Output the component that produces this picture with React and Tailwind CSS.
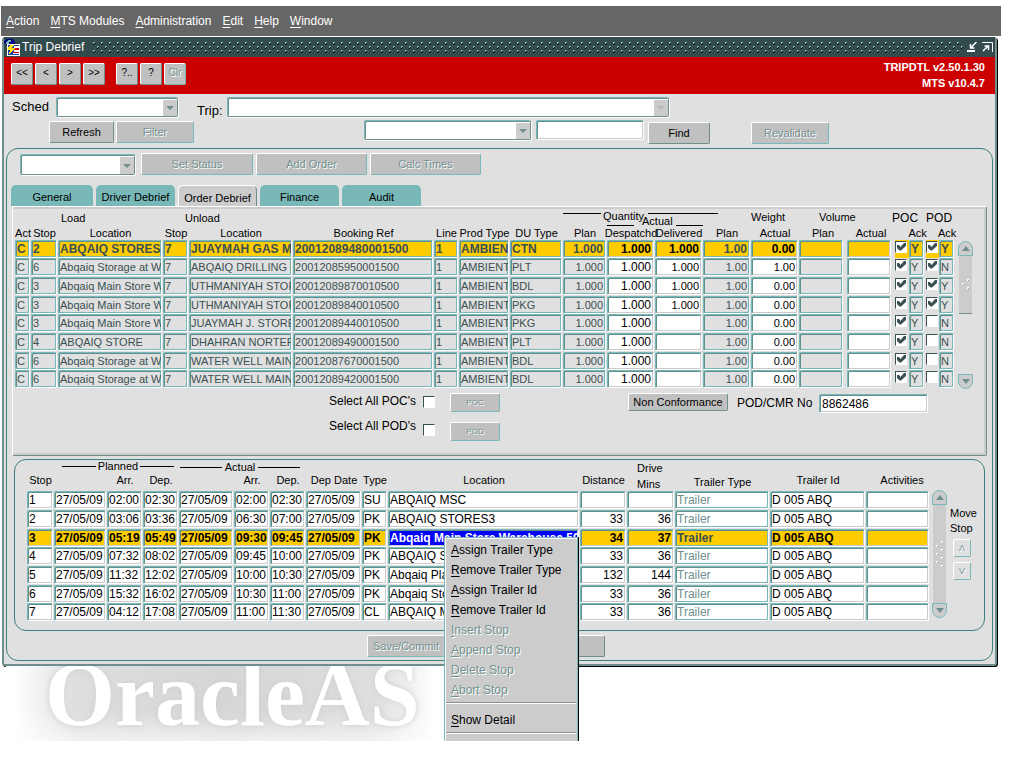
import React from "react";

const orderCols = [
  { key: "act", label: "Act", col: "w-[16px]" },
  { key: "stop", label: "Stop", col: "w-[27px]" },
  { key: "load", label: "Location", col: "w-[105px]" },
  { key: "unloadStop", label: "Stop", col: "w-[26px]" },
  { key: "unload", label: "Location", col: "w-[104px]" },
  { key: "booking", label: "Booking Ref", col: "w-[141px]" },
  { key: "line", label: "Line", col: "w-[25px]" },
  { key: "prod", label: "Prod Type", col: "w-[51px]" },
  { key: "du", label: "DU Type", col: "w-[53px]" },
  { key: "qtyPlan", label: "Plan", col: "w-[44px]", right: true },
  { key: "despatched", label: "Despatchd", col: "w-[48px]", right: true, open: true, big: true },
  { key: "delivered", label: "Delivered", col: "w-[48px]", right: true, open: true },
  { key: "weightPlan", label: "Plan", col: "w-[48px]", right: true },
  { key: "weight", label: "Actual", col: "w-[48px]", right: true, open: true },
  { key: "volumePlan", label: "Plan", col: "w-[48px]", gap: true },
  { key: "volume", label: "Actual", col: "w-[48px]", gap: true, open: true },
  { key: "poc", label: "", col: "w-[14px]", check: true },
  { key: "pocAck", label: "Ack", col: "w-[17px]", gap2: true },
  { key: "pod", label: "", col: "w-[13px]", check: true },
  { key: "podAck", label: "Ack", col: "w-[16px]" },
];

const order = (stop, load, unload, booking, du, despatched, delivered, weight, pod, podAck) => ({
  act: "C", stop, load, unloadStop: "7", unload, booking, line: "1", prod: "AMBIENT", du,
  qtyPlan: "1.000", despatched, delivered, weightPlan: "1.00", weight,
  volumePlan: "", volume: "", poc: true, pocAck: "Y", pod, podAck,
});

const orders = [
  order("2", "ABQAIQ STORES3", "JUAYMAH GAS MAIN", "20012089480001500", "CTN", "1.000", "1.000", "0.00", true, "Y"),
  order("6", "Abqaiq Storage at Wh", "ABQAIQ DRILLING MAT", "20012085950001500", "PLT", "1.000", "1.000", "1.00", true, "N"),
  order("3", "Abqaiq Main Store Wh", "UTHMANIYAH STORE", "20012089870010500", "BDL", "1.000", "1.000", "0.00", true, "Y"),
  order("3", "Abqaiq Main Store Wh", "UTHMANIYAH STORE", "20012089840010500", "PKG", "1.000", "1.000", "0.00", true, "Y"),
  order("3", "Abqaiq Main Store Wh", "JUAYMAH J. STORE", "20012089440010500", "PKG", "1.000", "", "0.00", false, "N"),
  order("4", "ABQAIQ STORE", "DHAHRAN NORTERN", "20012089490001500", "PLT", "1.000", "", "0.00", false, "N"),
  order("6", "Abqaiq Storage at Wh", "WATER WELL MAINT", "20012087670001500", "BDL", "1.000", "", "0.00", false, "N"),
  order("6", "Abqaiq Storage at Wh", "WATER WELL MAINT", "20012089420001500", "BDL", "1.000", "", "0.00", false, "N"),
];

const stopCols = [
  { label: "Stop", col: "w-[27px]" },
  { label: "", col: "w-[53px]" },
  { label: "Arr.", col: "w-[36px]" },
  { label: "Dep.", col: "w-[36px]" },
  { label: "", col: "w-[55px]" },
  { label: "Arr.", col: "w-[36px]" },
  { label: "Dep.", col: "w-[36px]" },
  { label: "Dep Date", col: "w-[56px]" },
  { label: "Type", col: "w-[26px]" },
  { label: "Location", col: "w-[192px]" },
  { label: "Distance", col: "w-[47px]", right: true },
  { label: "Mins", col: "w-[48px]", right: true },
  { label: "Trailer Type", col: "w-[95px]", muted: true },
  { label: "Trailer Id", col: "w-[96px]" },
  { label: "Activities", col: "w-[64px]" },
];

const D = "27/05/09";
const T = "Trailer";
const ID = "D 005 ABQ";

const stops = [
  ["1", D, "02:00", "02:30", D, "02:00", "02:30", D, "SU", "ABQAIQ MSC", "", "", T, ID, ""],
  ["2", D, "03:06", "03:36", D, "06:30", "07:00", D, "PK", "ABQAIQ STORES3", "33", "36", T, ID, ""],
  ["3", D, "05:19", "05:49", D, "09:30", "09:45", D, "PK", "Abqaiq Main Store Warehouse 50", "34", "37", T, ID, ""],
  ["4", D, "07:32", "08:02", D, "09:45", "10:00", D, "PK", "ABQAIQ STORE", "33", "36", T, ID, ""],
  ["5", D, "11:32", "12:02", D, "10:00", "10:30", D, "PK", "Abqaiq Plant", "132", "144", T, ID, ""],
  ["6", D, "15:32", "16:02", D, "10:30", "11:00", D, "PK", "Abqaiq Storage", "33", "36", T, ID, ""],
  ["7", D, "04:12", "17:08", D, "11:00", "11:30", D, "CL", "ABQAIQ MSC", "33", "36", T, ID, ""],
];

const disabledText = "text-[#739292] [text-shadow:1px_1px_0_#fff]";

function Btn({ className = "", disabled, children, ...rest }) {
  return (
    <button
      type="button"
      disabled={disabled}
      className={`shrink-0 overflow-hidden whitespace-nowrap rounded-[2px] border border-t-white border-l-white bg-[#c0c0c0] ${
        disabled
          ? `border-r-[#78b8b8] border-b-[#78b8b8] ${disabledText}`
          : "border-r-[#6f8f8f] border-b-[#6f8f8f] text-black"
      } ${className}`}
      {...rest}
    >
      {children}
    </button>
  );
}

function Field({ className = "", ...rest }) {
  return (
    <input
      type="text"
      readOnly
      className={`block w-full min-w-0 rounded-[2px] border border-t-[#78b8b8] border-l-[#78b8b8] border-r-white border-b-white outline-none ${className}`}
      {...rest}
    />
  );
}

const insetOpen = "shadow-[inset_1px_1px_0_#5f8f8f,inset_-1px_-1px_0_#cccccc]";
const insetClosed = "shadow-[inset_1px_1px_0_#5f8f8f,inset_-1px_-1px_0_#78b8b8]";

function Combo({ label, id, className = "", faint }) {
  return (
    <div
      className={`relative shrink-0 rounded-[2px] border border-t-[#78b8b8] border-l-[#78b8b8] border-r-[#6f8f8f] border-b-[#6f8f8f] bg-white shadow-[1px_1px_0_#fff,inset_1px_1px_0_#6f8f8f] ${className}`}
    >
      <select id={id} aria-label={label} className="h-full w-full appearance-none outline-none">
        <option></option>
      </select>
      <span className="pointer-events-none absolute top-[2px] right-0 bottom-0 flex w-[14px] items-center justify-center bg-[#cccccc]">
        <svg width="8" height="4" viewBox="0 0 8 4">
          <path d="M0 0h8L4 4z" fill={faint ? "#b8b8b8" : "#6f8f8f"} />
        </svg>
      </span>
    </div>
  );
}

function Check({ checked, ...rest }) {
  return (
    <span className="grid h-[12px] w-[12px]">
      <input
        type="checkbox"
        defaultChecked={checked}
        className="col-start-1 row-start-1 h-[12px] w-[12px] appearance-none border border-t-[#3a5052] border-l-[#3a5052] border-r-white border-b-white bg-white"
        {...rest}
      />
      {checked && (
        <svg width="12" height="12" viewBox="0 0 12 12" className="pointer-events-none col-start-1 row-start-1">
          <path d="M2 4h2l1.500 2L9 2h2v3L6 9.500H4.500L2 7z" fill="#3a5052" />
        </svg>
      )}
    </span>
  );
}

function ArrowCap({ down }) {
  return (
    <button
      type="button"
      aria-label={down ? "Scroll down" : "Scroll up"}
      className={`flex h-[15px] w-[15px] shrink-0 items-center justify-center border border-[#78b8b8] bg-[#cccccc] ${
        down ? "rounded-b-full" : "rounded-t-full"
      }`}
    >
      <svg width="8" height="5" viewBox="0 0 8 5">
        <path d={down ? "M0 0h8L4 5z" : "M0 5h8L4 0z"} fill="#6f8f8f" />
      </svg>
    </button>
  );
}

function Grip({ tall }) {
  const rows = tall ? [0, 4, 8, 12, 16, 20, 24] : [0, 4, 8];
  return (
    <svg width="8" height={tall ? 27 : 11} shapeRendering="crispEdges">
      {rows.map((y, i) => {
        const x = i % 2 ? 0 : 5;
        return (
          <g key={y}>
            <rect x={x} y={y} width="2" height="2" fill="#fff" />
            <rect x={x + 1} y={y + 1} width="1" height="1" fill="#78b8b8" />
          </g>
        );
      })}
    </svg>
  );
}

function MenuBar() {
  return (
    <nav className="mr-2 ml-px flex h-[30px] items-center gap-[11px] bg-[#666666] pl-[5px] text-[12px] text-white">
      {["Action", "MTS Modules", "Administration", "Edit", "Help", "Window"].map((m) => (
        <button key={m} type="button">
          <span className="underline underline-offset-2">{m[0]}</span>
          {m.slice(1)}
        </button>
      ))}
    </nav>
  );
}

function TitleBar() {
  return (
    <div className="flex h-5 items-center bg-[#344b4d] text-white">
      <svg width="16" height="17" viewBox="0 0 16 17" className="shrink-0" shapeRendering="crispEdges">
        <path d="M3 0h5l3 3v4H4L0 4V2z" fill="#000080" />
        <path d="M4 1h3v2H5v2H2V3z" fill="#78b8b8" />
        <rect x="3" y="5" width="13" height="12" fill="#fff" />
        <rect x="4" y="6" width="11" height="10" fill="#1c3fb0" />
        <path d="M10 7h5v2h-5zM10 11h5v2h-5zM9 14h6v1H9z" fill="#fff" />
        <path d="M10 9h5v2h-5zM9 13h6v1H9z" fill="#d00000" />
        <path d="M6 6h4L8 9h3l-6 7 1-5H3z" fill="#ffe600" />
      </svg>
      <h1 className="mr-2 ml-[2px] text-[12px]">Trip Debrief</h1>
      <svg height="11" className="w-full min-w-0 flex-1" shapeRendering="crispEdges" aria-hidden="true">
        <defs>
          <pattern id="dots" width="8" height="8" patternUnits="userSpaceOnUse">
            <rect x="1" y="0" width="2" height="2" fill="#78b8b8" />
            <rect x="2" y="1" width="1" height="1" fill="#000" />
            <rect x="1" y="2" width="1" height="1" fill="#000" />
            <rect x="5" y="4" width="2" height="2" fill="#78b8b8" />
            <rect x="6" y="5" width="1" height="1" fill="#000" />
            <rect x="5" y="6" width="1" height="1" fill="#000" />
          </pattern>
        </defs>
        <rect width="100%" height="11" fill="url(#dots)" />
      </svg>
      <div className="mr-[2px] ml-1 flex gap-[5px]">
        <button type="button" aria-label="Minimize">
          <svg width="10" height="10" viewBox="0 0 10 10" className="block" fill="none" stroke="#fff">
            <path d="M9.500 0L4 5.500M3.500 2v4h4" strokeWidth="1.500" />
            <path d="M0 9h8" strokeWidth="2" />
          </svg>
        </button>
        <button type="button" aria-label="Maximize">
          <svg width="11" height="10" viewBox="0 0 11 10" className="block" fill="none" stroke="#fff">
            <path d="M0 .5h10.500V10" />
            <path d="M1 9l5-5M2.500 4h4v4" strokeWidth="1.500" />
          </svg>
        </button>
      </div>
    </div>
  );
}

function Toolbar() {
  const btn = "h-[22px] w-[22px] text-[10px] leading-none pb-[3px]";
  return (
    <div className="flex h-[37px] items-start bg-[#cc0000] pt-[6px] pl-[7px]">
      <div className="flex gap-[2px]">
        <Btn className={btn}>&lt;&lt;</Btn>
        <Btn className={btn}>&lt;</Btn>
        <Btn className={btn}>&gt;</Btn>
        <Btn className={btn}>&gt;&gt;</Btn>
      </div>
      <div className="ml-[11px] flex gap-[2px]">
        <Btn className={btn}>?..</Btn>
        <Btn className={btn}>?</Btn>
        <Btn className={btn} disabled>Clr</Btn>
      </div>
      <div className="-mt-1 mr-[10px] ml-auto text-right text-[11px] leading-4 font-bold text-white">
        <p>TRIPDTL v2.50.1.30</p>
        <p>MTS v10.4.7</p>
      </div>
    </div>
  );
}

function Filters() {
  return (
    <div className="pt-[3px]">
      <div className="flex h-[23px] items-start pl-2">
        <label htmlFor="sched" className="w-[44px] text-[13px] leading-5">Sched</label>
        <Combo id="sched" className="h-5 w-[122px]" />
        <label htmlFor="trip" className="ml-[19px] w-[30px] pt-1 text-[13px] leading-5">Trip:</label>
        <Combo id="trip" className="h-5 w-[442px]" faint />
      </div>
      <div className="flex h-6 items-start pl-[45px]">
        <Btn className="mt-px h-[22px] w-[65px]">Refresh</Btn>
        <Btn className="mt-px ml-[2px] h-[22px] w-[78px]" disabled>Filter</Btn>
        <Combo label="Search by" className="ml-[170px] h-5 w-[167px]" />
        <Field aria-label="Search text" className={`ml-[5px] h-5 max-w-[108px] bg-white px-1 ${insetOpen}`} />
        <Btn className="mt-[2px] ml-[4px] h-[22px] w-[62px]">Find</Btn>
        <Btn className="mt-[2px] ml-[41px] h-[22px] w-[78px]" disabled>Revalidate</Btn>
      </div>
    </div>
  );
}

function Tabs() {
  const tabs = ["General", "Driver Debrief", "Order Debrief", "Finance", "Audit"];
  return (
    <div role="tablist" className="mt-[10px] flex gap-[3px] pl-1">
      {tabs.map((t) => (
        <button
          key={t}
          type="button"
          role="tab"
          aria-selected={t === "Order Debrief"}
          className={`h-[21px] w-[79px] rounded-t-[5px] pt-1 first:w-[82px] ${
            t === "Order Debrief"
              ? "border border-b-0 border-t-white border-l-white border-r-[#6f8f8f] bg-[#cccccc]"
              : "bg-[#78b8b8]"
          }`}
        >
          {t}
        </button>
      ))}
    </div>
  );
}

function OrderTable() {
  return (
    <div className="flex pt-px pl-[2px]">
      <table className="w-full min-w-0 flex-1 table-fixed border-collapse">
        <colgroup>
          {orderCols.map((c) => (
            <col key={c.key} className={c.col} />
          ))}
        </colgroup>
        <thead className="whitespace-nowrap">
          <tr className="h-[18px] text-left leading-[13px]">
            <th colSpan={2} />
            <th className="pt-1 pl-[3px] align-top font-normal">Load</th>
            <th colSpan={2} className="pt-1 pl-[22px] align-top font-normal">Unload</th>
            <th colSpan={4} />
            <th colSpan={4} className="align-top font-normal">
              <div className="mt-[2px] flex h-[5px] items-start gap-[2px]">
                <span className="mt-[3px] h-px w-[38px] bg-black" />
                <span>Quantity</span>
                <span className="mt-[3px] ml-[2px] h-px w-[70px] bg-black" />
              </div>
              <div className="flex h-[11px] items-start gap-2 pl-[44px]">
                <span className="mt-[10px] h-px w-[27px] bg-black" />
                <span>Actual</span>
                <span className="mt-[10px] -ml-[5px] h-px w-[27px] bg-black" />
              </div>
            </th>
            <th className="pt-[3px] align-top font-normal">Weight</th>
            <th colSpan={2} className="pt-[3px] pl-5 align-top font-normal">Volume</th>
            <th colSpan={2} className="pt-1 align-top text-[12px] font-normal">
              <span className="-ml-[3px]">POC</span>
            </th>
            <th colSpan={2} className="pt-1 align-top text-[12px] font-normal">POD</th>
          </tr>
          <tr className="h-[14px] leading-[14px]">
            {orderCols.map((c) => (
              <th key={c.key} className="align-top font-normal">
                <span className="flex justify-center">{c.label}</span>
              </th>
            ))}
          </tr>
        </thead>
        <tbody>
          {orders.map((o, i) => {
            const current = i === 0;
            return (
              <tr key={o.booking} className={i % 3 === 0 ? "h-[18px]" : "h-[19px]"}>
                {orderCols.map((c) =>
                  c.check ? (
                    <td key={c.key} className={`pt-px align-top ${current ? "bg-[#ffcc00]" : ""}`}>
                      <Check checked={o[c.key]} aria-label={c.key} />
                    </td>
                  ) : (
                    <td key={c.key} className={`align-top ${c.gap ? "pr-1" : c.gap2 ? "pr-[2px]" : "pr-px"}`}>
                      <Field
                        aria-label={c.key}
                        defaultValue={o[c.key]}
                        className={`h-[18px] ${c.right ? "pr-[2px] text-right" : "pl-px"} ${
                          current
                            ? "bg-[#ffcc00] text-[12px] font-bold"
                            : c.open
                              ? "bg-white"
                              : "bg-[#e0e0e0]"
                        } ${c.big ? "text-[12px]" : ""} ${
                          c.open ? `text-black ${insetOpen}` : `text-[#3a5052] ${insetClosed}`
                        }`}
                      />
                    </td>
                  )
                )}
              </tr>
            );
          })}
        </tbody>
      </table>
      <div className="mt-[33px] mr-[13px] ml-[3px] flex w-[15px] flex-col">
        <ArrowCap />
        <div className="flex h-[58px] w-[13px] items-center justify-center self-center border-b border-[#6f8f8f] bg-[#cccccc]">
          <Grip />
        </div>
        <div className="flex-1" />
        <ArrowCap down />
      </div>
    </div>
  );
}

function OrderFooter() {
  return (
    <div className="flex items-start pl-[316px] text-[12px]">
      <div className="flex w-[94px] flex-col leading-[25px] whitespace-nowrap">
        <label htmlFor="all-poc">Select All POC's</label>
        <label htmlFor="all-pod">Select All POD's</label>
      </div>
      <div className="mt-[7px] flex w-[27px] flex-col gap-4">
        <Check id="all-poc" />
        <Check id="all-pod" />
      </div>
      <div className="mt-[4px] flex flex-col gap-[10px]">
        <Btn className="h-[19px] w-[50px] text-[8px]" disabled>POC</Btn>
        <Btn className="h-[19px] w-[50px] text-[8px]" disabled>POD</Btn>
      </div>
      <Btn className="mt-[4px] ml-[128px] h-[18px] w-[100px] text-[11px]">Non Conformance</Btn>
      <label htmlFor="pod-no" className="mt-[5px] ml-[9px] w-[82px] leading-[18px] whitespace-nowrap">POD/CMR No</label>
      <Field id="pod-no" defaultValue="8862486" className={`mt-[5px] h-[19px] max-w-[109px] bg-white pl-[2px] ${insetOpen}`} />
    </div>
  );
}

function StopTable() {
  return (
    <table className="w-full min-w-0 flex-1 table-fixed border-collapse">
      <colgroup>
        {stopCols.map((c, i) => (
          <col key={i} className={c.col} />
        ))}
      </colgroup>
      <thead className="whitespace-nowrap">
        <tr className="h-[14px] leading-[13px]">
          <th />
          <th colSpan={3} className="align-top font-normal">
            <div className="flex items-center gap-[2px] pr-[5px] pl-2">
              <span className="h-px flex-1 bg-black" />
              Planned
              <span className="h-px flex-1 bg-black" />
            </div>
          </th>
          <th colSpan={3} className="align-top font-normal">
            <div className="flex items-center gap-[3px] pt-px pr-[6px] pl-px">
              <span className="h-px flex-1 bg-black" />
              Actual
              <span className="h-px flex-1 bg-black" />
            </div>
          </th>
          <th colSpan={4} />
          <th className="pt-[2px] pl-[10px] text-left align-top leading-[12px] font-normal">Drive</th>
          <th colSpan={3} />
        </tr>
        <tr className="h-[17px] leading-[13px]">
          {stopCols.map((c, i) => (
            <th
              key={i}
              className={`font-normal ${
                c.label === "Mins" ? "pl-[10px] text-left align-bottom" : c.muted ? "align-middle" : "align-top"
              } ${c.label === "Activities" ? "pl-2" : ""}`}
            >
              {c.label}
            </th>
          ))}
        </tr>
      </thead>
      <tbody>
        {stops.map((row, i) => {
          const current = i === 2;
          return (
            <tr key={row[0]} className={i % 3 === 2 ? "h-[18px]" : "h-[19px]"}>
              {stopCols.map((c, j) => {
                const picked = current && c.label === "Location";
                return (
                  <td key={j} className="pr-px align-top">
                    <Field
                      aria-label={c.label || "Date"}
                      defaultValue={row[j]}
                      className={`h-[18px] text-[12px] ${c.right ? "pr-[2px] text-right" : "pl-px"} ${
                        picked
                          ? "bg-[#0000ff] font-bold text-white"
                          : current
                            ? "bg-[#ffcc00] font-bold"
                            : "bg-white"
                      } ${
                        c.muted
                          ? `${insetClosed} ${current ? "text-[#3a5052]" : "text-[#6f8f8f]"}`
                          : `${insetOpen} ${picked ? "" : "text-black"}`
                      }`}
                    />
                  </td>
                );
              })}
            </tr>
          );
        })}
      </tbody>
    </table>
  );
}

function StopPanel() {
  const move = `h-[18px] w-[18px] rounded-[2px] border border-t-white border-l-white border-r-[#78b8b8] border-b-[#78b8b8] bg-[#e0e0e0] text-[9px] leading-none ${disabledText}`;
  return (
    <section className="mx-[7px] mt-[3px] flex rounded-xl border border-[#3f7f7f] pb-2 pl-3">
      <StopTable />
      <div className="mt-[30px] ml-[2px] flex h-[128px] w-[15px] flex-col">
        <ArrowCap />
        <div className="flex w-[13px] flex-1 items-center justify-center self-center bg-[#cccccc]">
          <Grip tall />
        </div>
        <ArrowCap down />
      </div>
      <div className="mt-[46px] flex w-[37px] flex-col pl-[3px]">
        <p className="leading-[15px]">Move Stop</p>
        <button type="button" aria-label="Move stop up" className={`mt-[3px] ml-[3px] ${move}`}>Λ</button>
        <button type="button" aria-label="Move stop down" className={`mt-[5px] ml-[3px] ${move}`}>V</button>
      </div>
    </section>
  );
}

function ContextMenu() {
  const items = [
    ["Assign Trailer Type"],
    ["Remove Trailer Type"],
    ["Assign Trailer Id"],
    ["Remove Trailer Id"],
    ["Insert Stop", true],
    ["Append Stop", true],
    ["Delete Stop", true],
    ["Abort Stop", true],
  ];
  const item = (text, off) => (
    <button
      key={text}
      type="button"
      role="menuitem"
      disabled={off}
      className={`block h-5 w-full pl-[6px] text-left whitespace-nowrap ${off ? disabledText : ""}`}
    >
      <span className="underline underline-offset-2">{text[0]}</span>
      {text.slice(1)}
    </button>
  );
  const rule = "mx-px h-[2px] border-t border-b border-t-[#8f8f8f] border-b-white";
  return (
    <div
      role="menu"
      className="absolute top-[537px] left-[444px] h-[205px] w-[134px] border-x border-t border-[#78b8b8] bg-[#cccccc] pt-[2px] text-[12px] shadow-[1px_0_0_#000,inset_1px_1px_0_#fff]"
    >
      {items.map(([text, off]) => item(text, off))}
      <div className={`mt-[2px] ${rule}`} />
      <div className="pt-[6px] pb-[2px]">{item("Show Detail")}</div>
      <div className={rule} />
    </div>
  );
}

function Backdrop() {
  return (
    <div className="relative ml-[6px] h-[75px] w-[438px] overflow-hidden">
      <div className="absolute inset-0 bg-[linear-gradient(90deg,#fff_2%,#dedede_16%,#d6d6d6_50%,#dedede_84%,#fff_98%)]" />
      <div className="absolute inset-0 bg-[linear-gradient(180deg,rgba(255,255,255,0)_60%,rgba(255,255,255,0.6)_100%)]" />
      <p className="absolute -top-[7px] left-[39px] font-['Liberation_Serif'] text-[90px] leading-[72px] font-bold whitespace-nowrap text-white [text-shadow:0_0_6px_#cfcfcf]">
        OracleAS
      </p>
    </div>
  );
}

function App() {
  return (
    <div className="relative overflow-hidden bg-white pt-[6px] font-['Liberation_Sans',Arial,sans-serif] text-[11px] text-black">
      <MenuBar />
      <main className="mt-px mr-3 ml-[2px] rounded-[3px] border-x-2 border-b-2 border-[#6f8f8f] bg-[#e0e0e0] shadow-[1px_1px_0_#000]">
        <TitleBar />
        <Toolbar />
        <Filters />
        <section className="mx-[2px] mt-1 mb-[3px] rounded-xl border border-[#3f7f7f] pt-1 pb-[3px]">
          <div className="flex items-start gap-[3px] pl-[13px]">
            <Combo label="Status" className="mt-px mr-[3px] h-[21px] w-[115px]" />
            <Btn className="h-[22px] w-[112px]" disabled>Set Status</Btn>
            <Btn className="h-[22px] w-[111px]" disabled>Add Order</Btn>
            <Btn className="h-[22px] w-[111px]" disabled>Calc Times</Btn>
          </div>
          <Tabs />
          <div className="mx-[5px] h-[250px] rounded-[2px] border border-t-white border-l-white border-r-[#6f8f8f] border-b-[#6f8f8f] shadow-[inset_0_2px_0_#cccccc,inset_-2px_-2px_0_#cccccc]">
            <OrderTable />
            <OrderFooter />
          </div>
          <StopPanel />
          <div className="mt-1 flex gap-[3px] pl-[360px]">
            <Btn className="h-[22px] w-[78px]" disabled>Save/Commit</Btn>
            <Btn className="h-[22px] w-[157px]" aria-label="Close" />
          </div>
        </section>
      </main>
      <Backdrop />
      <ContextMenu />
    </div>
  );
}

export default App;
